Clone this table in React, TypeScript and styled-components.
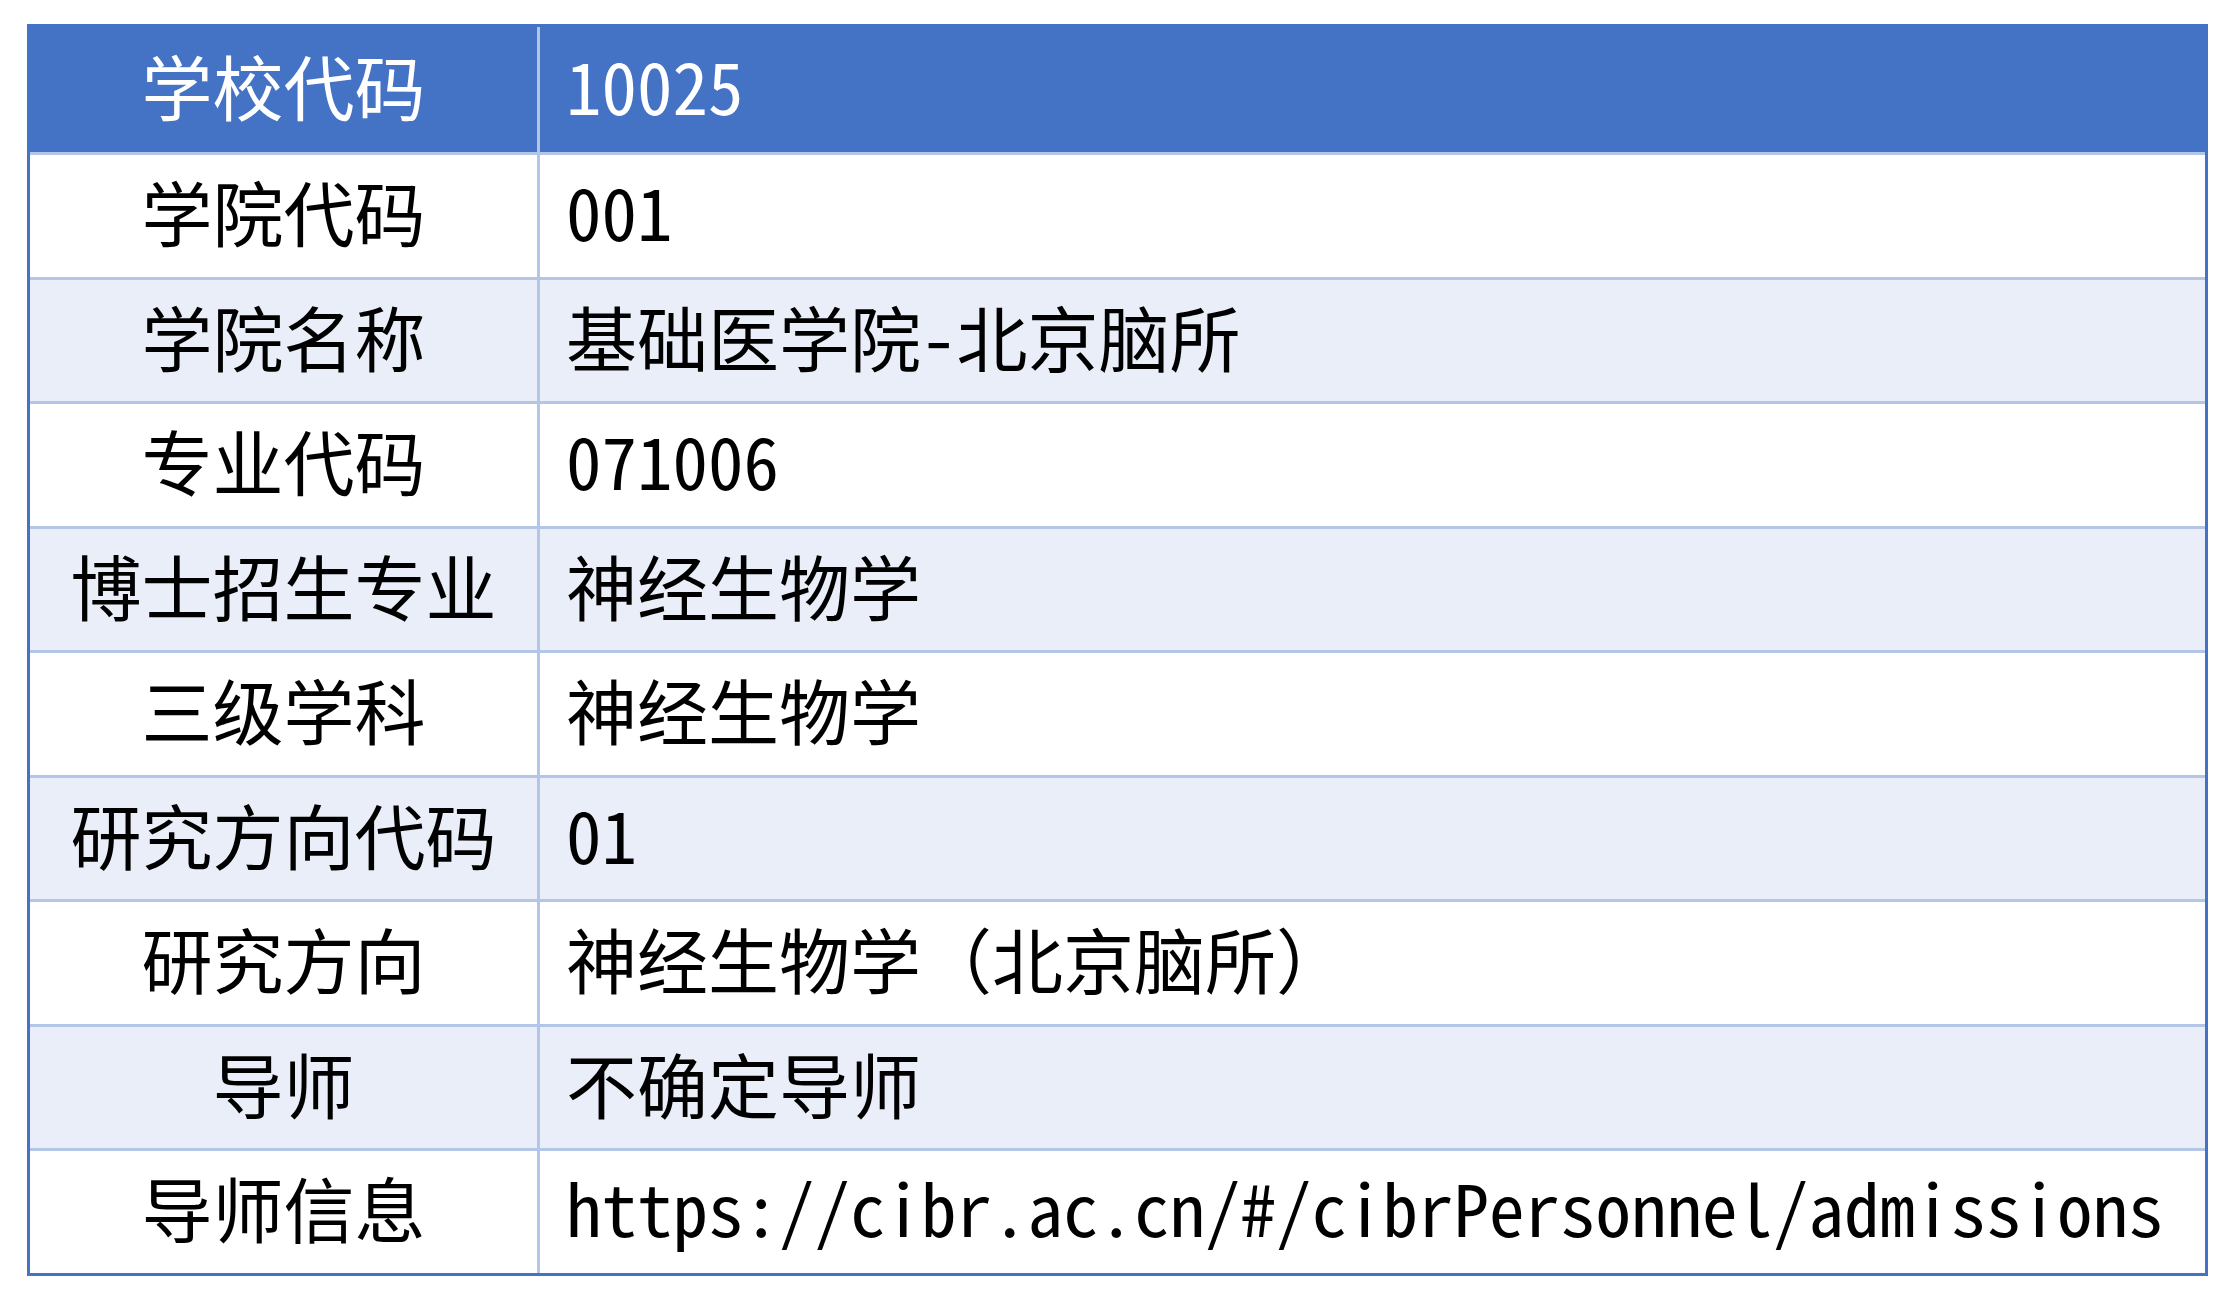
import React from 'react';
import styled, { createGlobalStyle } from 'styled-components';

const GlobalStyle = createGlobalStyle`
  html, body {
    margin: 0;
    padding: 0;
    background: #ffffff;
  }
  body {
    font-family: "Noto Sans Mono CJK SC", "Noto Sans CJK SC", "Liberation Sans", sans-serif;
  }
`;

const Page = styled.div`
  padding: 24px 30px 19px 27px;
`;

const Table = styled.div`
  width: 2181px;
  box-sizing: border-box;
  border: 3px solid #4472c4;
  display: flex;
  flex-direction: column;
`;

const Row = styled.div<{ variant: 'head' | 'plain' | 'tint' }>`
  display: grid;
  grid-template-columns: 510px 1fr;
  height: ${props => (props.variant === 'head' ? '125px' : '121.5px')};
  background-color: ${props =>
    props.variant === 'head' ? '#4472c4' : props.variant === 'tint' ? '#e9eef8' : '#ffffff'};
  color: ${props => (props.variant === 'head' ? '#ffffff' : '#000000')};
  & + & {
    border-top: 3px solid #b4c6e7;
  }
`;

const Label = styled.div`
  display: flex;
  align-items: center;
  justify-content: center;
  padding-bottom: 10px;
  border-right: 3px solid #b4c6e7;
  font-size: 71px;
  line-height: 1;
  white-space: nowrap;
`;

const Value = styled.div`
  display: flex;
  align-items: center;
  padding: 0 0 10px 26px;
  font-size: 71px;
  line-height: 1;
  white-space: nowrap;
`;

const rows: [string, string][] = [
  ['学校代码', '10025'],
  ['学院代码', '001'],
  ['学院名称', '基础医学院-北京脑所'],
  ['专业代码', '071006'],
  ['博士招生专业', '神经生物学'],
  ['三级学科', '神经生物学'],
  ['研究方向代码', '01'],
  ['研究方向', '神经生物学（北京脑所）'],
  ['导师', '不确定导师'],
  ['导师信息', 'https://cibr.ac.cn/#/cibrPersonnel/admissions'],
];

const App: React.FC = () => {
  return (
    <>
      <GlobalStyle />
      <Page>
        <Table>
          {rows.map(([label, value], i) => (
            <Row key={label} variant={i === 0 ? 'head' : i % 2 === 0 ? 'tint' : 'plain'}>
              <Label>{label}</Label>
              <Value>{value}</Value>
            </Row>
          ))}
        </Table>
      </Page>
    </>
  );
};

export default App;
